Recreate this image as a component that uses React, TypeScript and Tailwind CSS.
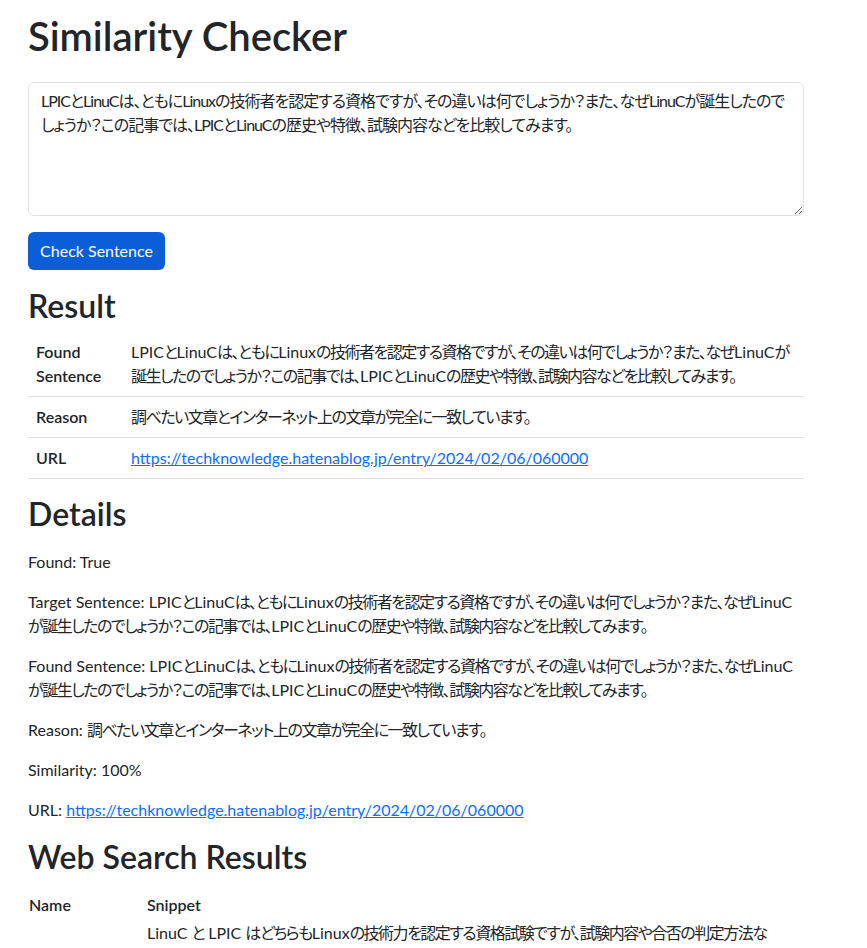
import React from "react";

const URL = "https://techknowledge.hatenablog.jp/entry/2024/02/06/060000";
const SENT =
  "LPICとLinuCは、ともにLinuxの技術者を認定する資格ですが、その違いは何でしょうか？また、なぜLinuCが誕生したのでしょうか？この記事では、LPICとLinuCの歴史や特徴、試験内容などを比較してみます。";
const REASON = "調べたい文章とインターネット上の文章が完全に一致しています。";
const SNIPPET =
  "LinuC と LPIC はどちらもLinuxの技術力を認定する資格試験ですが、試験内容や合否の判定方法などに違いがあります。本記事では、それぞれの試験の特徴や出題範囲、難易度、受験費用、認定の有効期限などを比較しながら、これからLinuxを学ぶ方がどちらの資格を取得するべきかについて、実際の受験経験をもとに詳しく解説します。キャリアや目的に合わせた資格選びの参考にしてください。";

const CJK = /([\u3000-\u30ff\u4e00-\u9fff\uff00-\uffef]+)/;

function J({ t }: { t: string }) {
  const parts = t.split(CJK);
  return (
    <>
      {parts.map((p, i) =>
        i % 2 === 1 ? (
          <span key={i} className="tracking-[-1.5px]">
            {p}
          </span>
        ) : (
          <React.Fragment key={i}>{p}</React.Fragment>
        )
      )}
    </>
  );
}

export default function App() {
  return (
    <div
      className="min-h-screen bg-white text-[#212529] text-[16px] leading-[24px]"
      style={{ fontFamily: 'Lato, "Noto Sans CJK JP", sans-serif', fontFeatureSettings: '"palt"' }}
    >
      <div className="pl-[28px] pt-[12px] w-[804px]">
        <h1 className="text-[40px] leading-[48px] font-semibold mb-[22px]">Similarity Checker</h1>

        <form className="mb-[17px]">
          <textarea
            rows={5}
            defaultValue={SENT}
            className="block w-full h-[134px] border border-[#dee2e6] rounded-[6px] px-[12px] py-[6px] text-[16px] leading-[24px] tracking-[-1px] text-[#212529] mb-[16px] outline-none"
            style={{ fontFamily: "inherit", fontFeatureSettings: '"palt"' }}
          />
          <button
            type="button"
            className="h-[38px] w-[137px] px-[12px] rounded-[6px] bg-[#0b5ed7] text-white text-[16px] leading-[24px]"
          >
            Check Sentence
          </button>
        </form>

        <h2 className="text-[32px] leading-[38px] font-semibold mb-[7px]">Result</h2>
        <table className="w-full mb-[16px] border-collapse">
          <tbody>
            <tr className="border-b border-[#dee2e6]">
              <th className="w-[95px] text-left align-top px-[8px] py-[8px] font-semibold">Found Sentence</th>
              <td className="px-[8px] py-[8px]">
                <J t={SENT} />
              </td>
            </tr>
            <tr className="border-b border-[#dee2e6]">
              <th className="text-left align-top px-[8px] py-[8px] font-semibold">Reason</th>
              <td className="px-[8px] py-[8px]">
                <J t={REASON} />
              </td>
            </tr>
            <tr className="border-b border-[#dee2e6]">
              <th className="text-left align-top px-[8px] py-[8px] font-semibold">URL</th>
              <td className="px-[8px] py-[8px]">
                <a href="#" className="text-[#0d6efd] underline">
                  {URL}
                </a>
              </td>
            </tr>
          </tbody>
        </table>

        <h2 className="text-[32px] leading-[38px] font-semibold mb-[17px]">Details</h2>
        <div className="flex flex-col gap-[16px] mb-[16px]">
          <p>Found: True</p>
          <p>
            Target Sentence: <J t={SENT} />
          </p>
          <p>
            Found Sentence: <J t={SENT} />
          </p>
          <p>
            Reason: <J t={REASON} />
          </p>
          <p>Similarity: 100%</p>
          <p>
            URL:{" "}
            <a href="#" className="text-[#0d6efd] underline">
              {URL}
            </a>
          </p>
        </div>

        <h2 className="text-[32px] leading-[38px] font-semibold mb-[15px]">Web Search Results</h2>
        <table className="w-full table-fixed">
          <thead>
            <tr>
              <th className="w-[118px] text-left px-px py-[2px] font-semibold">Name</th>
              <th className="text-left px-px py-[2px] pr-[30px] font-semibold">Snippet</th>
            </tr>
          </thead>
          <tbody>
            <tr>
              <td className="align-middle px-px py-[2px] pr-[8px]">
                <J t="LinuCとLPICの違いを比較" />
              </td>
              <td className="px-px py-[2px] pr-[30px]">
                <J t={SNIPPET} />
              </td>
            </tr>
          </tbody>
        </table>
      </div>
    </div>
  );
}
